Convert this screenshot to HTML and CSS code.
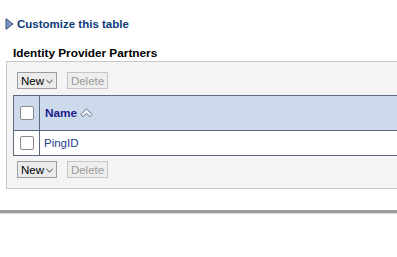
FILE: index.html
```html
<!DOCTYPE html>
<html>
<head>
<meta charset="utf-8">
<link rel="stylesheet" href="styles.css">
</head>
<body>
<div class="page">
  <div class="customize">
    <svg class="tri" width="9" height="12" viewBox="0 0 9 12"><path d="M1 0.8 L8 6 L1 11.2 Z" fill="#7d95c0" stroke="#2d4a80" stroke-width="1"/></svg>
    <span>Customize this table</span>
  </div>
  <div class="title">Identity Provider Partners</div>
  <div class="panel">
    <div class="toolbar">
      <button class="btn">New<svg class="caret" width="7" height="5" viewBox="0 0 7 5"><path d="M0.5 1 L3.5 4 L6.5 1" fill="none" stroke="#333" stroke-width="1"/></svg></button>
      <button class="btn disabled">Delete</button>
    </div>
    <table class="grid">
      <tr class="head">
        <th class="chk"><span class="box"></span></th>
        <th class="name">Name <svg class="sort" width="13" height="10" viewBox="0 0 13 10"><path d="M0.8 6.5 L6.5 0.8 L12.2 6.5 L10 8.7 L6.5 5.2 L3 8.7 Z" fill="#f4f6fa" stroke="#5f6f88" stroke-width="1"/></svg></th>
      </tr>
      <tr class="row">
        <td class="chk"><span class="box"></span></td>
        <td class="cell">PingID</td>
      </tr>
    </table>
    <div class="toolbar bottom">
      <button class="btn">New<svg class="caret" width="7" height="5" viewBox="0 0 7 5"><path d="M0.5 1 L3.5 4 L6.5 1" fill="none" stroke="#333" stroke-width="1"/></svg></button>
      <button class="btn disabled">Delete</button>
    </div>
  </div>
  <div class="rule"></div>
</div>
</body>
</html>
```
FILE: styles.css
```css
html, body {
  margin: 0;
  padding: 0;
  background: #fff;
  overflow: hidden;
}
.page {
  font-family: "Liberation Sans", Arial, sans-serif;
  font-size: 11px;
}
.customize {
  display: flex;
  align-items: center;
  gap: 3px;
  padding: 18px 0 0 5px;
  height: 12px;
  color: #0b3b7a;
  font-weight: bold;
  font-size: 11.5px;
}
.title {
  margin: 16px 0 0 13px;
  font-weight: bold;
  color: #000;
  height: 14px;
  font-size: 11.8px;
}
.panel {
  margin: 1px 0 0 6px;
  background: #f4f4f4;
  border: 1px solid #c8c8c8;
  border-right: none;
  height: 126px;
  padding: 0 0 0 6px;
}
.toolbar {
  display: flex;
  gap: 10px;
  padding: 10px 0 0 4px;
  height: 17px;
}
.toolbar.bottom {
  padding-top: 5px;
}
.btn {
  display: flex;
  align-items: center;
  gap: 2px;
  height: 17px;
  padding: 0 3px 0 3px;
  background: #ebebeb;
  border: 1px solid #9c9c9c;
  font-family: inherit;
  font-size: 11.5px;
  color: #000;
  margin: 0;
  box-sizing: border-box;
}
.btn:first-child { width: 40px; }
.btn.disabled {
  width: 41px;
  color: #9a9a9a;
  border-color: #c4c4c4;
  background: #eee;
  justify-content: center;
}
.caret { margin-top: 1px; }
.grid {
  margin-top: 6px;
  border-collapse: collapse;
  width: 100%;
  background: #fff;
}
.grid td, .grid th {
  padding: 0;
}
.head th {
  background: #ccdaeb;
  height: 34px;
  border-top: 1px solid #5c6a7e;
  border-bottom: 1px solid #5c6a7e;
  text-align: left;
}
.chk {
  width: 25px;
  border-left: 1px solid #5c6a7e;
  border-right: 1px solid #5c6a7e;
  text-align: center !important;
}
.box {
  display: inline-block;
  width: 12px;
  height: 12px;
  border: 1px solid #8a8a8a;
  background: #fff;
  border-radius: 2px;
  vertical-align: middle;
}
.name {
  color: #1a1a8c;
  font-weight: bold;
  font-size: 11.8px;
  padding-left: 5px !important;
}
.sort { vertical-align: -1px; }
.row td {
  height: 24px;
  border-bottom: 1px solid #5c6a7e;
}
.cell {
  color: #1c3c8c;
  font-size: 11.5px;
  padding-left: 4px !important;
}
.rule {
  margin-top: 21px;
  height: 3px;
  background: #9a9a9a;
  border-bottom: 1px solid #d8d8d8;
}
```
